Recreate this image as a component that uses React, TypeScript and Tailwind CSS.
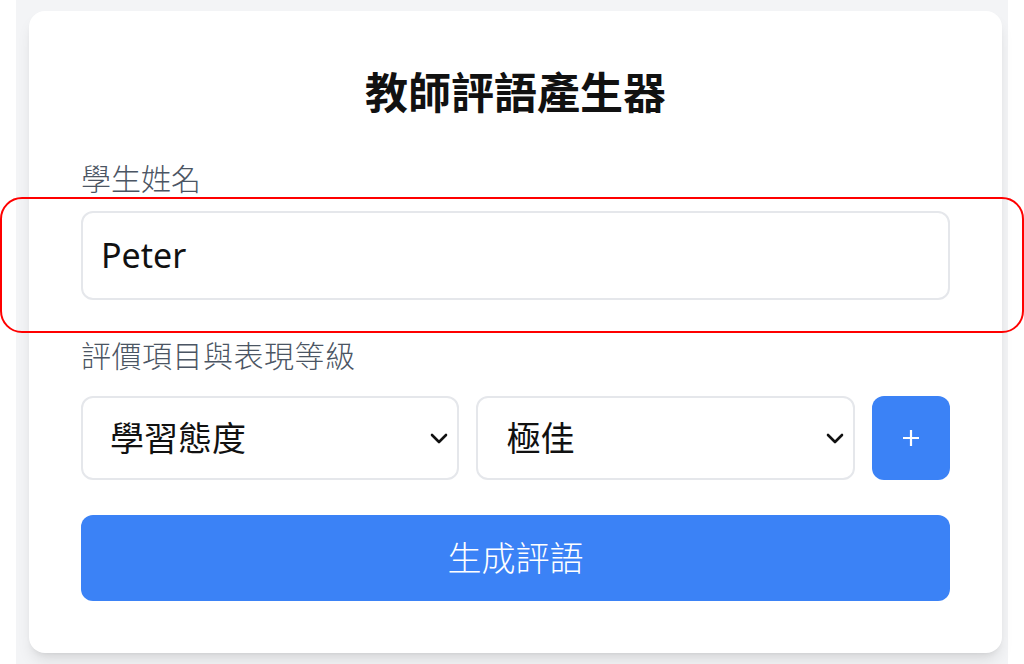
import React from "react";

const cjk = { fontFamily: '"Noto Sans", "Noto Sans CJK TC", sans-serif' };

function Chevron() {
  return (
    <svg width="18" height="11" viewBox="0 0 18 11" fill="none" className="shrink-0">
      <path d="M2 2 L9 9 L16 2" stroke="#111" strokeWidth="2.6" strokeLinecap="round" strokeLinejoin="round" />
    </svg>
  );
}

function Select({ value, pl }: { value: string; pl: string }) {
  return (
    <div className={`flex-1 h-[84px] flex items-center justify-between border-2 border-[#e5e7eb] rounded-[12px] bg-white pr-[9px] ${pl}`}>
      <span className="text-[34px] leading-none text-[#111]">{value}</span>
      <Chevron />
    </div>
  );
}

export default function App() {
  return (
    <div className="w-[1024px] h-[664px] bg-white overflow-hidden relative" style={cjk}>
      <div className="ml-[16px] w-[992px] h-[664px] bg-[#f3f4f6] pt-[11px] pl-[13px]">
        <div className="w-[973px] h-[642px] bg-white rounded-[16px] shadow-lg px-[52px] pt-[56px]">
          <h1 className="text-[43px] leading-[52px] font-bold text-center text-[#111]">教師評語產生器</h1>
          <div className="mt-[42px] text-[30px] leading-[36px] font-light text-[#4b5563]">學生姓名</div>
          <div className="mt-[14px] h-[89px] border-2 border-[#e5e7eb] rounded-[12px] flex items-center pl-[18px]">
            <span className="text-[34px] text-[#111]">Peter</span>
          </div>
          <div className="mt-[38px] text-[30px] leading-[36px] font-light text-[#4b5563] tracking-[0.5px]">評價項目與表現等級</div>
          <div className="mt-[22px] flex gap-[17px]">
            <Select value="學習態度" pl="pl-[27px]" />
            <Select value="極佳" pl="pl-[29px]" />
            <div className="w-[78px] h-[84px] rounded-[12px] bg-[#3b82f6] flex items-center justify-center">
              <svg width="18" height="18" viewBox="0 0 18 18" fill="none">
                <path d="M9 1 V17 M1 9 H17" stroke="#fff" strokeWidth="2.2" />
              </svg>
            </div>
          </div>
          <div className="mt-[35px] h-[86px] rounded-[12px] bg-[#3b82f6] flex items-center justify-center text-white font-light text-[34px]">
            生成評語
          </div>
        </div>
      </div>
      <div className="absolute left-0 top-[197px] w-[1024px] h-[136px] border-2 border-[#ff0000] rounded-[22px] pointer-events-none" />
    </div>
  );
}
